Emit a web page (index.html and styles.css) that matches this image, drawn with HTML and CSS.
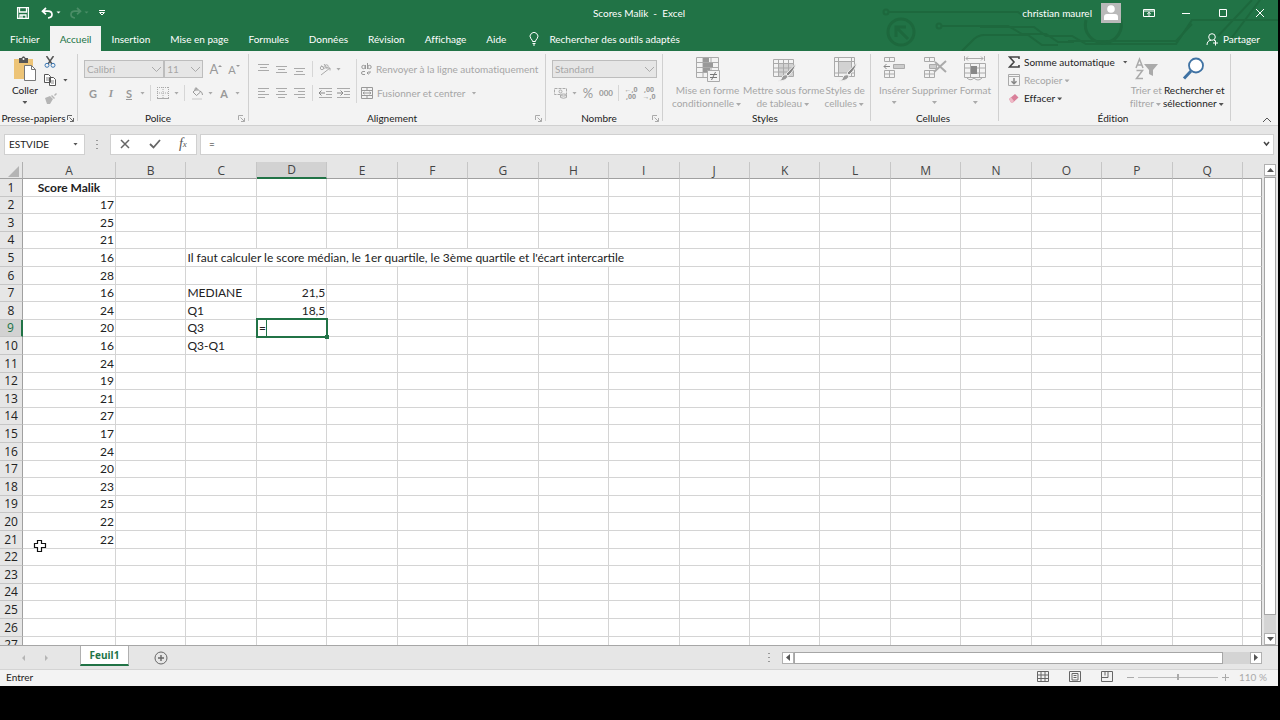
FILE: index.html
```html
<!DOCTYPE html>
<html lang="fr">
<head>
<meta charset="utf-8">
<title>Scores Malik - Excel</title>
<link rel="stylesheet" href="styles.css">
</head>
<body>
<div class="app">
  <header class="top">
    <svg class="circuit" viewBox="0 0 400 51" fill="none" stroke="#1d683d" stroke-width="2">
      <circle cx="8" cy="12" r="2.5"/><path d="M11 12H140l8 6h50"/>
      <circle cx="61" cy="26" r="2.5"/><path d="M64 26h66l14 8h24l12 8h16"/>
      <circle cx="23" cy="32" r="13" stroke-width="3"/><path d="M30 39L18 27M18 37V27h10" stroke-width="3"/>
      <path d="M84 51l12-12q5-4 10-4h44l14 10h16"/>
      <path d="M102 27h54l12 9h26l14 8h90l16-24h86"/>
      <path d="M190 41h108l16-17"/><path d="M208 20a18 18 0 1 0 34-2" stroke-width="3"/>
      <path d="M352 40l30-40M340 36l34-36"/>
    </svg>
    <div class="titlebar">
      <div class="quick">
        <button class="qb" aria-label="Enregistrer"><svg width="14" height="14" viewBox="0 0 14 14" fill="none" stroke="#fff" stroke-width="1.3"><path d="M1.6 1.6h10.8v10.8H1.600zM3.500 2v4h7V2M4 12V9h6v3M6 9.500v2.500"/></svg></button>
        <button class="qb" aria-label="Annuler"><svg width="20" height="12" viewBox="0 0 20 12" fill="none" stroke="#fff" stroke-width="1.700"><path d="M5 1L1.500 4.200 5 7.400M2 4.200h5q4 0 4 3.400 0 3-4 3.400"/><path d="M15.500 4.500h4l-2 2z" fill="#fff" stroke="none"/></svg></button>
        <button class="qb" aria-label="Rétablir"><svg width="20" height="12" viewBox="0 0 20 12" fill="none" stroke="#4b8d67" stroke-width="1.700"><path d="M8 1l3.500 3.200L8 7.400M11 4.200H6q-4 0-4 3.400 0 3 4 3.400"/><path d="M15.500 4.500h4l-2 2z" fill="#4b8d67" stroke="none"/></svg></button>
        <button class="qb slim" aria-label="Personnaliser"><svg width="8" height="8" viewBox="0 0 8 8" fill="none" stroke="#fff"><path d="M1 1.500h6M1.500 3.500h5L4 6z"/></svg></button>
      </div>
      <h1 class="doc">Scores Malik&nbsp; -&nbsp; Excel</h1>
      <div class="account">
        <span>christian maurel</span>
        <svg class="avatar" width="20" height="20" viewBox="0 0 20 20"><path fill="#b9b9b9" d="M0 0h20v20H0z"/><circle cx="10" cy="6" r="3.800" fill="#fff"/><path fill="#fff" d="M3 17v-3q0-3 3-3h8q3 0 3 3v3z"/></svg>
        <button class="wb" aria-label="Ruban"><svg width="12" height="10" viewBox="0 0 12 10" fill="none" stroke="#fff"><path d="M.5 1.500h11v7H.5zM.5 3h11M6 8V4.500M4.200 6L6 4.300 7.800 6"/></svg></button>
        <button class="wb" aria-label="Réduire"><svg width="10" height="10" viewBox="0 0 10 10" stroke="#fff"><path d="M1 5.500h8"/></svg></button>
        <button class="wb" aria-label="Agrandir"><svg width="10" height="10" viewBox="0 0 10 10" fill="none" stroke="#fff"><path d="M1.500 1.500h7v7h-7z"/></svg></button>
        <button class="wb" aria-label="Fermer"><svg width="10" height="10" viewBox="0 0 10 10" stroke="#fff"><path d="M1 1l8 8M9 1L1 9"/></svg></button>
      </div>
    </div>
    <nav class="tabs">
      <button>Fichier</button><button class="active">Accueil</button><button>Insertion</button><button>Mise en page</button><button>Formules</button><button>Données</button><button>Révision</button><button>Affichage</button><button>Aide</button>
      <button class="tell"><svg width="10" height="14" viewBox="0 0 10 14" fill="none" stroke="#fff"><path d="M3.500 9.500Q3.500 8 2 6.800A3.900 3.900 0 1 1 8 6.800Q6.500 8 6.500 9.500zM3.500 11.500h3M4 13h2"/></svg>Rechercher des outils adaptés</button>
      <button class="share"><svg width="13" height="13" viewBox="0 0 13 13" fill="none" stroke="#fff"><circle cx="6" cy="4" r="3.300"/><path d="M1 12q0-4.500 4-4.700M9.500 7.500v5M7 10h5M8 7.300l1.500.7"/></svg>Partager</button>
    </nav>
  </header>

  <section class="ribbon">
    <div class="group clip">
      <div class="body">
        <button class="big on"><svg width="24" height="26" viewBox="0 0 24 26"><path fill="#edc477" d="M1 3h19v20H1z"/><path fill="#555" d="M6 2h2.500q2-3.500 4 0H15v5H6z"/><circle cx="10.500" cy="3" r="1" fill="#fff"/><path d="M11.500 9.500h7l4 4v11h-11z" fill="#fff" stroke="#777"/><path d="M18.500 9.500v4h4" fill="none" stroke="#777"/></svg><span>Coller</span><i class="caret"></i></button>
        <div class="stack">
          <button class="tool" aria-label="Couper"><svg width="12" height="12" viewBox="0 0 12 12" fill="none"><path stroke="#555" stroke-width="1.500" d="M2.500 0l5.500 8M9.500 0L4 8"/><circle cx="3" cy="9.300" r="2" stroke="#3c78b4"/><circle cx="9" cy="9.300" r="2" stroke="#3c78b4"/></svg></button>
          <button class="tool pair" aria-label="Copier"><svg width="13" height="12" viewBox="0 0 13 12" fill="#fff" stroke="#555"><path d="M.5.5h4l2 2v6h-6zM5.500 3.500h4l2 2v6h-6z"/><path d="M2 4h3M2 6h3M7 7h3M7 9h3" stroke="#888"/></svg><i class="caret"></i></button>
          <button class="tool" aria-label="Reproduire la mise en forme"><svg width="13" height="11" viewBox="0 0 13 11" fill="#b5b5b5"><path d="M1 5l5-2 3 3-3 5H3zM7 3l1-1 3 3-1 1zM10 2l2-2 1 1-2 2z"/></svg></button>
        </div>
      </div>
      <div class="caption"><span>Presse-papiers</span><svg class="launch on" width="7" height="7" viewBox="0 0 7 7"><path d="M.5 5V.5H5M2.500 2.500l4 4M6.500 3v3.500H3"/></svg></div>
    </div>

    <div class="group font">
      <div class="body rows">
        <div class="line">
          <span class="combo family"><select aria-label="Police"><option>Calibri</option></select><svg width="11" height="7" viewBox="0 0 11 7"><path d="M1 1l4.500 4.500L10 1"/></svg></span>
          <span class="combo size"><select aria-label="Taille"><option>11</option></select><svg width="11" height="7" viewBox="0 0 11 7"><path d="M1 1l4.500 4.500L10 1"/></svg></span>
          <button class="tool g first">A<svg width="4" height="10" viewBox="0 0 4 10"><path d="M0 3l2-2 2 2z" fill="#999"/></svg></button>
          <button class="tool g small">A<svg width="4" height="10" viewBox="0 0 4 10"><path d="M0 1h4L2 3z" fill="#999"/></svg></button>
        </div>
        <div class="line">
          <button class="tool g b">G</button><button class="tool g i">I</button><button class="tool g u">S</button><i class="caret dim"></i><i class="sep"></i>
          <button class="tool" aria-label="Bordures"><svg width="12" height="12" viewBox="0 0 12 12" fill="none" stroke="#aaa"><path stroke-dasharray="1 1" d="M.5 0v11M6 0v11M11.500 0v11M0 .5h12M0 6h12"/><path d="M0 11.500h12"/></svg></button><i class="caret dim"></i><i class="sep"></i>
          <button class="tool" aria-label="Remplissage"><svg width="13" height="13" viewBox="0 0 13 13" fill="none" stroke="#999"><path d="M2 5l4-3.500L9.500 5 5.500 8.500zM4 4V1.500q1-1.500 2 0V4M9 4q2.500 1 2.500 4"/><path stroke="#ddd" stroke-width="2" d="M1 12h10"/></svg></button><i class="caret dim"></i>
          <button class="tool g b color">A</button><i class="caret dim"></i>
        </div>
      </div>
      <div class="caption"><span>Police</span><svg class="launch" width="7" height="7" viewBox="0 0 7 7"><path d="M.5 5V.5H5M2.500 2.500l4 4M6.500 3v3.500H3"/></svg></div>
    </div>

    <div class="group align">
      <div class="body">
        <div class="rows">
          <div class="line">
            <button class="tool" aria-label="Haut"><svg width="12" height="12" viewBox="0 0 12 12" stroke="#aaa"><path d="M0 1.500h11M2 4.500h7M0 7.500h11"/></svg></button>
            <button class="tool" aria-label="Milieu"><svg width="12" height="12" viewBox="0 0 12 12" stroke="#aaa"><path d="M0 3.500h11M2 6.500h7M0 9.500h11"/></svg></button>
            <button class="tool" aria-label="Bas"><svg width="12" height="12" viewBox="0 0 12 12" stroke="#aaa"><path d="M0 5.500h11M2 8.500h7M0 11.500h11"/></svg></button>
            <i class="sep"></i>
            <button class="tool" aria-label="Orientation"><svg width="13" height="13" viewBox="0 0 13 13" fill="none" stroke="#aaa"><circle cx="3" cy="5" r="1.700"/><path d="M2.500 2.500L5.500 6M5 1l3 4"/><circle cx="7.500" cy="3.500" r="1.700"/><path d="M2 12l9-7M8.500 5H11v2.500"/></svg></button><i class="caret dim"></i>
          </div>
          <div class="line">
            <button class="tool" aria-label="Gauche"><svg width="12" height="12" viewBox="0 0 12 12" stroke="#aaa"><path d="M0 1.500h11M0 4.500h7M0 7.500h11M0 10.500h7"/></svg></button>
            <button class="tool" aria-label="Centre"><svg width="12" height="12" viewBox="0 0 12 12" stroke="#aaa"><path d="M0 1.500h11M2 4.500h7M0 7.500h11M2 10.500h7"/></svg></button>
            <button class="tool" aria-label="Droite"><svg width="12" height="12" viewBox="0 0 12 12" stroke="#aaa"><path d="M0 1.500h11M4 4.500h7M0 7.500h11M4 10.500h7"/></svg></button>
            <i class="sep"></i>
            <button class="tool" aria-label="Diminuer le retrait"><svg width="13" height="12" viewBox="0 0 13 12" fill="none" stroke="#aaa"><path d="M0 1.500h13M7 4.500h6M7 7.500h6M0 10.500h13"/><path stroke="#888" d="M0 6h6M2.500 3.500L0 6l2.500 2.500"/></svg></button>
            <button class="tool" aria-label="Augmenter le retrait"><svg width="13" height="12" viewBox="0 0 13 12" fill="none" stroke="#aaa"><path d="M0 1.500h13M7 4.500h6M7 7.500h6M0 10.500h13"/><path stroke="#888" d="M0 6h6M3.500 3.500L6 6 3.500 8.500"/></svg></button>
          </div>
        </div>
        <i class="sep tall"></i>
        <div class="rows">
          <button class="line text"><svg width="11" height="13" viewBox="0 0 11 13" fill="none" stroke="#999"><circle cx="2.500" cy="4" r="1.700"/><path d="M4.500 2v4M6.500 0v6M4 8.500H2q-1.500 0-1.500 1.500T2 11.500h2M6 10h3V8M7.500 8.500L6 10l1.500 1.500"/><circle cx="8.500" cy="4" r="1.700"/></svg>Renvoyer à la ligne automatiquement</button>
          <button class="line text"><svg width="12" height="12" viewBox="0 0 12 12" fill="none" stroke="#999"><path d="M.5.5h11v11H.5zM.5 3.500h11M.5 8.500h11M6 0v3M6 9v3M2 6h8M3.500 4.800L2 6l1.500 1.200M8.500 4.800L10 6 8.500 7.200"/></svg>Fusionner et centrer<i class="caret dim"></i></button>
        </div>
      </div>
      <div class="caption"><span>Alignement</span><svg class="launch" width="7" height="7" viewBox="0 0 7 7"><path d="M.5 5V.5H5M2.500 2.500l4 4M6.500 3v3.500H3"/></svg></div>
    </div>

    <div class="group number">
      <div class="body rows">
        <div class="line"><span class="combo format"><select aria-label="Format de nombre"><option>Standard</option></select><svg width="11" height="7" viewBox="0 0 11 7"><path d="M1 1l4.500 4.500L10 1"/></svg></span></div>
        <div class="line">
          <button class="tool" aria-label="Monétaire"><svg width="14" height="12" viewBox="0 0 14 12" fill="none" stroke="#aaa"><path d="M.5 1.500h12v6H.5z" stroke-dasharray="3 1"/><circle cx="6.500" cy="4.500" r="1.500"/><ellipse cx="9.500" cy="8" rx="3" ry="1" fill="#f3f3f3"/><path d="M6.500 8v2.500q3 1.500 6 0V8"/></svg></button><i class="caret dim"></i>
          <button class="tool g pct">%</button><button class="tool g mil">000</button><i class="sep"></i>
          <button class="tool dec" aria-label="Ajouter une décimale"><span>&#8592;,0<br>,00</span></button>
          <button class="tool dec" aria-label="Réduire les décimales"><span>,00<br>&#8594;,0</span></button>
        </div>
      </div>
      <div class="caption"><span>Nombre</span><svg class="launch" width="7" height="7" viewBox="0 0 7 7"><path d="M.5 5V.5H5M2.500 2.500l4 4M6.500 3v3.500H3"/></svg></div>
    </div>

    <div class="group styles">
      <div class="body">
        <button class="big"><svg width="24" height="26" viewBox="0 0 24 26" fill="none" stroke="#aaa"><path d="M.5 1.500h22v20H.5zM.5 6.500h22M.5 11.500h22M.5 16.500h22M7 1v20M15 1v20"/><path d="M7 2h6v4H7zM7 7h10v4H7zM7 12h7v4H7z" fill="#999" stroke="none"/><path d="M11.500 14.500h12v11h-12z" fill="#f3f3f3"/><path stroke="#777" d="M14 18.500h7M14 21.500h7M19.500 16l-4 8"/></svg><span>Mise en forme<br>conditionnelle<i class="caret dim"></i></span></button>
        <button class="big"><svg width="24" height="26" viewBox="0 0 24 26" fill="none" stroke="#aaa"><path d="M1.500 3.500h20v17h-20z"/><path d="M6 8h15v12H6z" fill="#d2d2d2" stroke="none"/><path d="M1.500 7.500h20M1.500 12h20M1.500 16h20M6.500 3v17M11.500 3v17M16.500 3v17"/><path d="M23.500 8L14 18l2 2q7-6 7.500-12z" fill="#888" stroke="#eee"/><path d="M6 25q4-1 4-4 3-4 6-1-1 5-10 5z" fill="#999" stroke="#eee"/></svg><span>Mettre sous forme<br>de tableau<i class="caret dim"></i></span></button>
        <button class="big"><svg width="24" height="26" viewBox="0 0 24 26" fill="none" stroke="#aaa"><path d="M1.500 1.500h20v19h-20z"/><path d="M6 6h12v11H6z" fill="#d2d2d2" stroke="none"/><path d="M1.500 5.500h20M1.500 17h20M5.500 1v19M18.500 1v19"/><path d="M23.500 7L14 17l2 2q7-6 7.500-12z" fill="#888" stroke="#eee"/><path d="M6 25q4-1 4-4 3-4 6-1-1 5-10 5z" fill="#999" stroke="#eee"/></svg><span>Styles de<br>cellules<i class="caret dim"></i></span></button>
      </div>
      <div class="caption"><span>Styles</span></div>
    </div>

    <div class="group cells">
      <div class="body">
        <button class="big"><svg width="22" height="26" viewBox="0 0 22 26" fill="none" stroke="#aaa"><path d="M1.500 1.500h10v4h-10zM6.500 1.500v4M1.500 14.500h10v7h-10zM6.500 14.500v7M1.500 18h10"/><path fill="#ccc" d="M10.500 8.500h11v4h-11z"/><path stroke="#888" d="M1 10.500h6M3.500 8L1 10.500 3.500 13"/></svg><span>Insérer</span><i class="caret dim"></i></button>
        <button class="big"><svg width="24" height="26" viewBox="0 0 24 26" fill="none" stroke="#aaa"><path d="M1.500 1.500h10v4h-10zM6.500 1.500v4M1.500 14.500h10v7h-10zM6.500 14.500v7M1.500 18h10"/><path fill="#ccc" d="M6.500 8.500h7v4h-7z"/><path stroke="#aaa" stroke-width="2" d="M12 6l11 10M23 5L11 16"/></svg><span>Supprimer</span><i class="caret dim"></i></button>
        <button class="big"><svg width="24" height="26" viewBox="0 0 24 26" fill="none" stroke="#aaa"><path d="M3 2.500h17M5 .5L3 2.500l2 2M18 .5l2 2-2 2M1.500 0v5M21.500 0v5M1.500 7.500h21v14h-21zM7.500 7v15M16.500 7v15M1.500 12h21M1.500 17h21M3 21q4 5 8 1 4 4 8 0"/><path fill="#888" stroke="none" d="M8 10h6v8H8z"/></svg><span>Format</span><i class="caret dim"></i></button>
      </div>
      <div class="caption"><span>Cellules</span></div>
    </div>

    <div class="group edit">
      <div class="body">
        <div class="list">
          <button class="text on"><svg width="12" height="12" viewBox="0 0 12 12" fill="none" stroke="#444" stroke-width="1.600"><path d="M11 3V1H1.500L6 6l-4.500 5H11V9"/></svg><span>Somme automatique</span><i class="caret far"></i></button>
          <button class="text"><svg width="12" height="12" viewBox="0 0 12 12" fill="none" stroke="#aaa"><path d="M.5.500h11v11H.5zM.5 2.500h11"/><path stroke="#888" stroke-width="1.500" d="M6 4v5.500M3.500 7.200L6 9.700l2.500-2.500"/></svg><span>Recopier<i class="caret dim"></i></span></button>
          <button class="text on"><svg width="12" height="12" viewBox="0 0 12 12"><path fill="#d9809a" d="M1 7l6-5 3.500 3.500L5 10.500H3z"/><path fill="#eeb9c6" d="M1 7l2-1.700L6 9l-1.200 1.500H3z"/></svg><span>Effacer<i class="caret"></i></span></button>
        </div>
        <button class="big"><svg width="24" height="26" viewBox="0 0 24 26" fill="none" stroke="#aaa" stroke-width="1.500"><path d="M2 12L5.500 3 9 12M3.200 9h4.600M2.500 14.500h6l-6 8h6.500"/><path fill="#aaa" stroke="none" d="M10 8h14l-5 6v6l-4-2v-4z"/></svg><span>Trier et<br>filtrer<i class="caret dim"></i></span></button>
        <button class="big on"><svg width="24" height="26" viewBox="0 0 24 26" fill="none"><circle cx="14" cy="9.500" r="7" fill="#fff" stroke="#3f72a3" stroke-width="1.800"/><path stroke="#3f72a3" stroke-width="3" d="M9 15l-7 7.500"/></svg><span>Rechercher et<br>sélectionner<i class="caret"></i></span></button>
      </div>
      <div class="caption"><span>Édition</span></div>
    </div>
    <button class="collapse" aria-label="Réduire le ruban"><svg width="10" height="6" viewBox="0 0 10 6" fill="none" stroke="#555"><path d="M1 5l4-4 4 4"/></svg></button>
  </section>

  <section class="formula">
    <div class="namebox"><input aria-label="Zone Nom" value="ESTVIDE"><i class="caret"></i></div>
    <i class="grip"></i>
    <div class="fx">
      <button aria-label="Annuler"><svg width="10" height="10" viewBox="0 0 10 10" stroke="#666" stroke-width="1.500"><path d="M1 1l8 8M9 1L1 9"/></svg></button>
      <button aria-label="Entrer"><svg width="12" height="10" viewBox="0 0 12 10" fill="none" stroke="#666" stroke-width="1.800"><path d="M1 5l3.500 3.500L11 1"/></svg></button>
      <button class="fn"><i>f</i><sub>x</sub></button>
    </div>
    <div class="entry"><input aria-label="Barre de formule" value="="><svg width="7" height="6" viewBox="0 0 7 6" fill="none" stroke="#444" stroke-width="1.500"><path d="M1 1l2.500 3L6 1"/></svg></div>
  </section>

  <main class="work">
    <div class="sheet">
      <table>
        <colgroup id="cols"></colgroup>
        <thead id="head"></thead>
        <tbody id="rows"></tbody>
      </table>
      <svg class="cursor" width="14" height="14" viewBox="0 0 14 14"><path d="M4.500 1.500h4v3h4v4h-4v4h-4v-4h-3v-4h3z" fill="#fff" stroke="#111" stroke-width="1.200"/></svg>
    </div>
    <div class="vscroll">
      <button aria-label="Défiler vers le haut"><svg width="7" height="4" viewBox="0 0 7 4"><path d="M0 4l3.500-4L7 4z" fill="#555"/></svg></button>
      <div class="thumb"></div>
      <button aria-label="Défiler vers le bas"><svg width="7" height="4" viewBox="0 0 7 4"><path d="M0 0h7L3.500 4z" fill="#555"/></svg></button>
    </div>
  </main>

  <div class="bottom">
    <svg class="navs" width="26" height="8" viewBox="0 0 26 8" fill="#b5b5b5"><path d="M3 1v6L0 4zM23 1v6l3-3z"/></svg>
    <button class="leaf">Feuil1</button>
    <button class="plus" aria-label="Nouvelle feuille"><svg width="14" height="14" viewBox="0 0 14 14" fill="none" stroke="#666"><circle cx="7" cy="7" r="6"/><path d="M7 4v6M4 7h6" stroke-width="1.400"/></svg></button>
    <i class="grip"></i>
    <div class="hscroll">
      <button aria-label="Défiler à gauche"><svg width="4" height="7" viewBox="0 0 4 7"><path d="M4 0v7L0 3.500z" fill="#555"/></svg></button>
      <div class="thumb"></div>
      <button aria-label="Défiler à droite"><svg width="4" height="7" viewBox="0 0 4 7"><path d="M0 0v7l4-3.500z" fill="#555"/></svg></button>
    </div>
  </div>

  <footer class="status">
    <span>Entrer</span>
    <div class="views">
      <button aria-label="Normal"><svg width="12" height="12" viewBox="0 0 12 12" fill="none" stroke="#666"><path d="M.5.5h11v10H.5zM4 .5v10M8 .5v10M.5 4h11M.5 7.500h11"/></svg></button>
      <button aria-label="Mise en page"><svg width="12" height="12" viewBox="0 0 12 12" fill="none" stroke="#666"><path d="M.5.5h11v10H.5zM3 2.500h6v6.500H3zM4.500 4.500h3M4.500 6.500h3"/></svg></button>
      <button aria-label="Sauts de page"><svg width="12" height="12" viewBox="0 0 12 12" fill="none" stroke="#666"><path d="M.5.5h11v10H.5zM.5 6.500H7V.5M4 .5v4"/></svg></button>
    </div>
    <div class="zoom">
      <button aria-label="Zoom arrière"><svg width="7" height="7" viewBox="0 0 7 7" stroke="#aaa"><path d="M0 3.500h7"/></svg></button>
      <input type="range" min="10" max="210" value="110" aria-label="Zoom">
      <button aria-label="Zoom avant"><svg width="7" height="7" viewBox="0 0 7 7" stroke="#aaa"><path d="M0 3.500h7M3.500 0v7"/></svg></button>
      <span>110 %</span>
    </div>
  </footer>
</div>
<script src="grid.js"></script>
</body>
</html>
```
FILE: styles.css
```css
* { box-sizing: border-box; }
body {
  margin: 0;
  background: #000;
  font: 10px/13px Lato, "Open Sans", sans-serif;
  font-variant-ligatures: none;
  color: #222;
}
button {
  margin: 0; padding: 0; border: 0; background: none;
  font: inherit; color: inherit;
  display: flex; align-items: center; justify-content: center;
}
svg { display: block; flex: none; }
input, select { font: inherit; color: inherit; min-width: 0; }

.app {
  margin-right: 2px;
  height: calc(100vh - 34px);
  display: flex; flex-direction: column;
  background: #e6e6e6;
  overflow: hidden;
}

/* Title bar and tabs */
.top { position: relative; background: #217346; color: #fff; flex: none; }
.circuit { position: absolute; right: 0; top: 0; width: 400px; height: 51px; }
.titlebar { position: relative; height: 26px; display: grid; grid-template-columns: 1fr auto 1fr; align-items: center; }
.quick { display: flex; align-items: center; padding-left: 12px; gap: 6px; }
.qb { width: 22px; height: 20px; }
.qb.slim { width: 12px; }
.doc { margin: 0; font-size: 10px; font-weight: 400; }
.account { display: flex; align-items: center; justify-content: flex-end; }
.avatar { margin: 0 9px; }
.wb { width: 37px; height: 24px; }
.tabs { position: relative; display: flex; height: 25px; }
.tabs button { padding: 1px 10px 0; }
.tabs .active { background: #f3f3f3; color: #217346; }
.tabs .tell { gap: 10px; margin-left: 3px; }
.tabs .share { margin-left: auto; padding-right: 18px; gap: 4px; }

/* Ribbon */
.ribbon { position: relative; display: flex; flex: none; height: 75px; background: #f3f3f3; border-bottom: 1px solid #d0d0d0; color: #a6a6a6; }
.group { display: flex; flex-direction: column; flex: none; position: relative; padding-top: 5px; }
.group::after { content: ""; position: absolute; right: 0; top: 3px; bottom: 4px; width: 1px; background: #d0d0d0; }
.body { display: flex; flex: 1; padding: 0 6px; }
.rows { display: flex; flex-direction: column; gap: 6px; }
.body.rows, .body > .rows { padding-top: 4px; }
.line { display: flex; align-items: center; height: 18px; }
.caption { display: flex; align-items: center; height: 14px; color: #222; padding-right: 4px; }
.caption span { flex: 1; text-align: center; white-space: nowrap; }
.launch { fill: none; stroke: #aaa; }
.launch.on { stroke: #666; }
.on { color: #222; }
.clip { width: 78px; }
.font { width: 171px; }
.align { width: 297px; }
.number { width: 117px; }
.styles { width: 208px; }
.cells { width: 128px; }
.edit { width: 232px; }

.big { flex-direction: column; justify-content: flex-start; text-align: center; white-space: nowrap; }
.big > svg { margin-bottom: 2px; }
.big > .caret { margin-top: 4px; }
.caret { display: inline-block; flex: none; width: 5px; height: 3px; background: #555; clip-path: polygon(0 0, 100% 0, 50% 100%); vertical-align: middle; margin: 0 2px; }
.caret.dim { background: #aaa; }
.caret.far { margin-left: 4px; }
.clip .body { padding-left: 12px; gap: 6px; }
.stack { display: flex; flex-direction: column; gap: 6px; align-items: flex-start; }
.stack .tool { width: auto; height: 12px; }
.stack .pair { gap: 4px; }
.tool { width: 18px; height: 18px; flex: none; }
.g { font-size: 11px; color: #999; }
.g.b { font-weight: 700; }
.g.i { font-style: italic; font-family: "Liberation Serif", serif; font-weight: 700; }
.g.u { text-decoration: underline; font-weight: 700; }
.g.first { margin-left: 4px; font-size: 13px; }
.sep { width: 1px; height: 16px; background: #d6d6d6; margin: 0 3px; flex: none; }
.sep.tall { height: 44px; margin-top: 3px; }
.combo { position: relative; display: flex; height: 18px; }
.combo select { appearance: none; width: 100%; height: 18px; padding: 0 0 0 2px; border: 1px solid #bdbdbd; border-radius: 0; background: #e6e6e6; color: #a6a6a6; }
.combo svg { position: absolute; right: 2px; top: 6px; fill: none; stroke: #aaa; pointer-events: none; }
.family { width: 83px; }
.size { width: 40px; }
.format { width: 105px; }
.text { gap: 4px; white-space: nowrap; justify-content: flex-start; }
.align .body { gap: 1px; }
.number .body { gap: 6px; }
.g.pct { font-size: 13px; }
.g.mil { font-size: 8px; font-weight: 700; }
.dec { font: 700 7px/7px "Open Sans", sans-serif; color: #999; }
.styles .body { justify-content: space-between; padding: 0 6px 0 9px; }
.cells .body { justify-content: space-between; padding: 0 8px; }
.edit .body { padding: 0 7px 0 9px; justify-content: space-between; }
.list { display: flex; flex-direction: column; gap: 6px; }
.list button { height: 12px; }
.collapse { position: absolute; right: 6px; bottom: 2px; }

/* Formula bar */
.formula { display: flex; align-items: center; flex: none; height: 36px; padding: 0 4px; }
.formula input { border: 0; outline: 0; background: none; padding: 0; width: 100%; }
.namebox, .fx, .entry { display: flex; align-items: center; height: 21px; background: #fff; border: 1px solid #d0d0d0; }
.namebox { width: 81px; padding: 0 4px; }
.grip { width: 2px; height: 9px; background: repeating-linear-gradient(#999 0 1px, transparent 1px 4px); flex: none; }
.formula .grip { margin: 0 12px 0 11px; }
.fx { width: 87px; justify-content: space-around; margin-right: 3px; }
.fn { font: 14px/14px "Liberation Serif", serif; color: #555; }
.fn sub { font-size: 9px; font-style: italic; }
.entry { flex: 1; padding: 0 3px 0 8px; }

/* Grid */
.work { flex: 1; min-height: 0; display: flex; gap: 2px; padding-right: 2px; border-bottom: 1px solid #a6a6a6; }
.sheet { flex: 1; position: relative; overflow: hidden; }
table { width: 100%; table-layout: fixed; border-collapse: separate; border-spacing: 0; font: 12px/16px Lato, sans-serif; color: #222; }
.c-head { width: 23px; }
.c-a { width: 93px; }
.c-last { width: 19px; }
th, td { padding: 0; overflow: hidden; white-space: nowrap; }
thead th { height: 17px; font: 12px/15px "Open Sans", sans-serif; color: #444; border-bottom: 1px solid #a0a0a0; border-right: 1px solid #c6c6c6; }
thead th:first-child { border-right-color: #b0b0b0; }
thead th:last-child { border-right: 0; }
thead .sel { background: #d2d2d2; border-bottom: 2px solid #217346; }
.corner svg { margin: 3px 3px 0 auto; }
tbody th { background: #e6e6e6; font: 12px/16px "Open Sans", sans-serif; border-bottom: 1px solid #c6c6c6; border-right: 1px solid #a0a0a0; }
tbody th.sel { background: #d2d2d2; border-right: 2px solid #217346; color: #217346; }
td { background: #fff; border-right: 1px solid #d4d4d4; border-bottom: 1px solid #d4d4d4; }
td:last-child { border-right-color: #a0a0a0; }
tbody tr { height: 18px; }
tbody tr:nth-child(5n+2), tbody tr:nth-child(5n+4) { height: 17px; }
.num { text-align: right; padding-right: 1px; }
.lbl { padding-left: 1px; }
.title { text-align: center; font-weight: 700; }
.edited { position: relative; overflow: visible; }
.edited div { position: absolute; inset: -2px -2px -2px -1px; border: 2px solid #217346; background: #fff; display: flex; }
.edited input { width: 9px; border: 0; border-right: 1px solid #217346; padding: 0 0 0 1px; outline: 0; background: none; }
.edited div::after { content: ""; position: absolute; right: -3px; bottom: -3px; width: 4px; height: 4px; background: #217346; }
.cursor { position: absolute; left: 33px; top: 377px; }

/* Scroll bars */
.vscroll { width: 12px; display: flex; flex-direction: column; margin-top: 2px; background: #d4d4d4; }
.vscroll button, .hscroll button { background: #fff; border: 1px solid #b0b0b0; flex: none; }
.vscroll button { height: 12px; }
.thumb { background: #fff; border: 1px solid #a6a6a6; flex: 1; }
.vscroll .thumb { margin: 1px 0 18px; }
.hscroll { display: flex; flex: 0 0 38%; height: 12px; background: #d4d4d4; }
.hscroll button { width: 12px; }
.hscroll .thumb { margin-right: 27px; }
.bottom { display: flex; align-items: center; flex: none; height: 23px; padding-right: 16px; }
.navs { margin: 0 32px 0 22px; }
.leaf { align-self: flex-start; height: 20px; width: 49px; background: #fff; border: 1px solid #b0b0b0; border-width: 0 1px; border-bottom: 2px solid #217346; color: #217346; font: 700 10px/13px "Open Sans", sans-serif; }
.plus { margin-left: 25px; }
.bottom .grip { margin-left: auto; margin-right: 12px; }

/* Status bar */
.status { display: flex; align-items: center; flex: none; height: 17px; padding: 0 15px 2px 6px; background: #f3f3f3; border-top: 1px solid #d4d4d4; }
.views { display: flex; gap: 20px; margin-left: auto; }
.zoom { display: flex; align-items: center; margin-left: 14px; color: #aaa; }
.zoom input { appearance: none; width: 80px; height: 10px; margin: 0 4px; background: linear-gradient(#bbb, #bbb) center / 100% 1px no-repeat; }
.zoom input::-webkit-slider-thumb { appearance: none; width: 2px; height: 6px; background: #aaa; }
.zoom span { width: 24px; margin-left: 10px; white-space: nowrap; }
```
FILE: grid.js
```js
const letters = 'ABCDEFGHIJKLMNOPQ'.split('');
const scores = [17, 25, 21, 16, 28, 16, 24, 20, 16, 24, 19, 21, 27, 17, 24, 20, 23, 25, 22, 22];
const cells = {
  C5: { text: "Il faut calculer le score médian, le 1er quartile, le 3ème quartile et l'écart intercartile", cls: 'lbl', span: 7 },
  C7: { text: 'MEDIANE', cls: 'lbl' }, D7: { text: '21,5', cls: 'num' },
  C8: { text: 'Q1', cls: 'lbl' }, D8: { text: '18,5', cls: 'num' },
  C9: { text: 'Q3', cls: 'lbl' }, C10: { text: 'Q3-Q1', cls: 'lbl' },
  A1: { text: 'Score Malik', cls: 'title' }
};
scores.forEach((v, i) => { cells['A' + (i + 2)] = { text: v, cls: 'num' }; });

document.getElementById('cols').innerHTML =
  '<col class="c-head"><col class="c-a">' + '<col>'.repeat(16) + '<col class="c-last">';
document.getElementById('head').innerHTML =
  '<tr><th class="corner"><svg width="11" height="11" viewBox="0 0 11 11"><path d="M11 0v11H0z" fill="#b4b4b4"/></svg></th>' +
  letters.map(l => `<th${l === 'D' ? ' class="sel"' : ''}>${l}</th>`).join('') + '<th></th></tr>';

let html = '';
for (let r = 1; r <= 27; r++) {
  html += `<tr><th${r === 9 ? ' class="sel"' : ''}>${r}</th>`;
  for (let c = 0; c < letters.length; c++) {
    const key = letters[c] + r;
    const cell = cells[key];
    if (key === 'D9') html += '<td class="edited"><div><input aria-label="D9" value="="></div></td>';
    else if (!cell) html += '<td></td>';
    else {
      html += `<td class="${cell.cls}"${cell.span ? ` colspan="${cell.span}"` : ''}>${cell.text}</td>`;
      if (cell.span) c += cell.span - 1;
    }
  }
  html += '<td></td></tr>';
}
document.getElementById('rows').innerHTML = html;
```
